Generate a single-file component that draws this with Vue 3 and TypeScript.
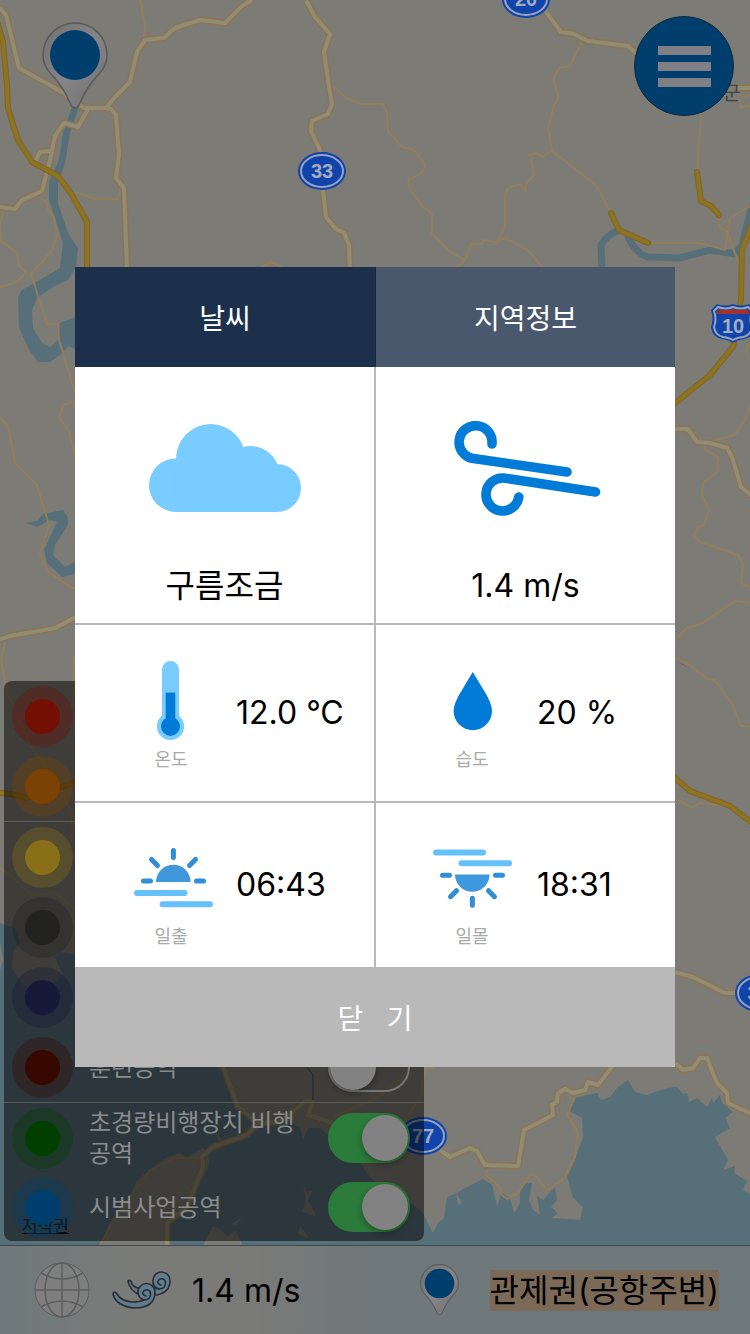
<script setup lang="ts">
import { ref } from 'vue'

interface Zone {
  id: string
  color: string
  label?: string
  on?: boolean
  divided?: boolean
}

const zones = ref<Zone[]>([
  { id: 'z1', color: '#740f03' },
  { id: 'z2', color: '#7c4203' },
  { id: 'z3', color: '#886f18', divided: true },
  { id: 'z4', color: '#222221' },
  { id: 'z5', color: '#161a38' },
  { id: 'z6', color: '#360800', label: '훈련공역', on: false },
  { id: 'z7', color: '#003f00', label: '초경량비행장치 비행공역', on: true, divided: true },
  { id: 'z8', color: '#003f6d', label: '시범사업공역', on: true },
])

const tab = ref<'weather' | 'area'>('weather')

const majorRoads: string[] = [
  'M0 8L6 15L19 68L62 92L84 108L106 108L115 97L130 82L137 52L145 40L164 38L175 28L200 20L225 23L243 5L252 0',
  'M104 108L111 109L116 115L119 155L116 178L124 188L127 270',
  'M88 109L78 127L64 123L55 136L50 160L42 191L22 200L15 209L0 207',
  'M50 151L40 152L34 164',
  'M306 0L315 17L330 34L324 52L328 80L332 104L328 114L312 121L311 131L320 150L323 190L326 217L336 229L344 233L349 245L350 270',
  'M546 12L561 32L574 34L588 41L628 46L640 57',
  'M736 88L752 88',
  'M0 639L10 636L55 628L76 617',
  'M675 429L688 429L697 442L710 443L727 448L732 457L741 487L752 496',
  'M675 972L693 977L725 993L740 993',
  'M167 1245L167 1223L187 1207L203 1167L202 1157L213 1147L247 1135L258 1123L280 1122L307 1100L313 1102L308 1115L333 1123',
  'M223 1066L238 1107L257 1122',
  'M440 1150L450 1157L470 1148L477 1151L485 1165L518 1166L524 1130L553 1115L552 1105L557 1102L558 1093L565 1089L573 1093L585 1090L588 1082L598 1085L614 1064',
  'M675 1063L683 1070L693 1068L700 1058L707 1058L717 1083L727 1093L728 1103L752 1114',
]

const minorRoads: string[] = [
  'M140 0L145 25L144 38',
  'M76 192L96 199L117 199L121 190',
  'M38 196L47 202L48 210L54 217L57 236L52 250L38 267',
  'M3 212L0 225L1 241L17 253L19 266L26 272L17 282L0 287',
  'M43 260L31 274L47 324L58 324L59 340L68 370L76 396',
  'M333 86L345 97L360 104L383 104L387 113L388 131L402 147L414 150L425 165L422 173L408 180L409 187L421 205L432 214L432 234L449 251L465 260L456 268',
  'M260 268L271 262L284 268',
  'M465 260L471 244L482 244L484 240L497 242L506 238L529 251L543 268',
  'M497 242L505 227L505 195L508 188L520 184L525 192L527 183L534 175L531 160L533 157L529 155L537 153L543 157L552 150L548 128L554 105L558 98L554 78L559 68L570 66L582 42',
  'M551 150L596 185L611 213',
  'M648 243L700 243L725 250L730 218L752 205',
  'M701 115L697 172',
  'M718 218L720 228L727 231L739 264',
  'M752 95Q737 95 741 108L752 104',
  'M752 340Q744 350 748 358',
  'M752 400L745 420L735 435L704 443L705 450L718 457L717 472L703 483L702 495L709 510L704 525L698 527L694 535L700 542L738 555L743 565L741 583L752 588',
  'M675 640L687 628L703 623L735 601L752 603',
  'M675 657L690 665L707 679L715 680L733 705L741 726L752 727',
  'M675 798L692 808L700 803L730 806L742 815',
  'M0 418L8 425L15 463L37 485L49 525L40 553L48 572L72 588L76 588',
  'M76 401L63 405L59 417L69 432L76 458',
  'M5 642L1 660L8 695L30 745L45 765L72 812L72 840',
  'M74 655L73 705',
  'M0 868L10 875L23 887L32 895L55 893L76 910',
  'M100 1245L112 1222L135 1190L150 1170L175 1158L203 1158',
  'M333 1117L380 1096L403 1078L408 1066',
  'M435 1068L425 1068L420 1097L405 1120',
  'M488 1168L486 1175L500 1187L502 1195L507 1199L518 1193L530 1175L535 1175L547 1190L565 1178L567 1172L575 1157L578 1132L567 1115L575 1097',
]

const highways: string[] = [
  'M-2 24L3 42L7 85L8 108L18 140L32 162L58 176L72 195L87 222L87 270',
  'M611 213L619 230L648 243',
  'M697 172L701 201L711 206L719 215',
  'M754 220L742 250L741 300L733 347L710 375L674 404',
  'M674 777L690 791L730 806L752 823',
  'M0 793L12 794L27 798L76 782',
]
</script>

<template>
  <div class="screen">
    <div class="map">
      <svg class="map-art" viewBox="0 0 750 1334" preserveAspectRatio="xMidYMid slice" aria-hidden="true">
        <rect width="750" height="1334" fill="#7d7b75" />
        <g fill="#566f79">
          <path d="M72 107L79 107L70 133L65 163L58 183L58 203L68 233L78 248L76 267L68 280L53 287L37 298L32 310L33 328L42 343L50 347L58 340L60 323L78 316L78 350L68 346L60 355L50 362L38 362L28 348L19 327L18 297L22 290L40 280L60 268L63 243L55 217L49 200L49 182L59 160L63 133Z" />
          <path d="M25 523L37 521L43 514L63 510L68 518L68 525L55 545L53 555L65 567L78 560L78 573L62 577L47 563L44 550L57 522L50 520L37 527Z" />
          <path d="M675 661L690 669L683 664Z" />
          <path d="M0 923L15 928L20 942L13 952L12 968L23 985L33 990L53 985L63 975L55 958L60 952L76 955L150 1000L217 1067L230 1080L240 1107L258 1120L290 1123L300 1127L303 1140L308 1128L320 1128L330 1137L360 1163L370 1177L380 1185L400 1193L423 1213L433 1233L438 1223L444 1218L447 1197L455 1194L465 1188L483 1179L492 1185L497 1206L502 1193L511 1199L515 1212L520 1203L520 1193L523 1184L532 1183L529 1200L533 1210L540 1215L537 1196L543 1200L555 1187L557 1200L551 1207L558 1213L551 1218L580 1220L583 1207L573 1198L567 1177L575 1160L583 1137L582 1118L568 1110L575 1098L597 1093L601 1100L610 1097L617 1088L628 1080L635 1092L647 1095L667 1088L677 1087L683 1094L687 1093L689 1102L697 1098L707 1107L712 1098L713 1103L720 1095L722 1103L733 1112L725 1118L730 1128L715 1137L728 1160L723 1170L735 1166L734 1173L747 1181L743 1190L752 1195L752 1334L0 1334Z" />
        </g>
        <g fill="#7d7b75">
          <path d="M100 1246L110 1223L130 1197L137 1180L150 1170L167 1157L180 1153L187 1157L203 1148L210 1160L207 1170L190 1200L170 1220L168 1246Z" />
          <path d="M203 1246L208 1235L213 1226L221 1230L227 1236L236 1231L243 1246Z" />
          <path d="M303 1183L306 1192L313 1190L308 1200L313 1208L315 1216L302 1212L306 1200ZM300 1226L304 1231L309 1239L298 1234Z" />
          <path d="M232 1224L242 1217L236 1225ZM456 1192L462 1203L458 1205ZM510 1198L519 1205L514 1213ZM215 1131L222 1140L218 1141Z" />
          <path d="M0 942L3 960L0 970Z" />
        </g>
        <g fill="none" stroke="#566f79" stroke-width="7">
          <path d="M602 268L601 245Q607 235 619 230" />
          <path d="M627 235Q636 254 648 257L680 258L710 250L735 254L742 245L752 205" />
        </g>
        <g fill="none" stroke="#927e5b" stroke-width="2" stroke-linejoin="round">
          <path v-for="road in minorRoads" :key="road" :d="road" />
        </g>
        <g fill="none" stroke-linejoin="round">
          <path v-for="road in majorRoads" :key="road" :d="road" stroke="#8c7455" stroke-width="7" />
          <path v-for="road in majorRoads" :key="road" :d="road" stroke="#918c74" stroke-width="4" />
        </g>
        <g fill="none" stroke-linejoin="round" stroke-linecap="round">
          <path v-for="road in highways" :key="road" :d="road" stroke="#846428" stroke-width="6" />
          <path v-for="road in highways" :key="road" :d="road" stroke="#8d7421" stroke-width="4" />
        </g>
        <g fill="none" stroke="#3c4a50" stroke-width="1">
          <path d="M307 1067L313 1075L313 1100" />
        </g>
        <g class="shield">
          <ellipse cx="322" cy="171" rx="24" ry="19" />
          <ellipse class="shield-line" cx="322" cy="171" rx="21" ry="16" />
          <text x="322" y="178">33</text>
          <ellipse cx="526" cy="-1" rx="24" ry="19" />
          <ellipse class="shield-line" cx="526" cy="-1" rx="21" ry="16" />
          <text x="526" y="6">20</text>
          <ellipse cx="423" cy="1136" rx="24" ry="19" />
          <ellipse class="shield-line" cx="423" cy="1136" rx="21" ry="16" />
          <text x="423" y="1143">77</text>
          <ellipse cx="759" cy="993" rx="24" ry="19" />
          <ellipse class="shield-line" cx="759" cy="993" rx="21" ry="16" />
          <text x="753" y="1000">3</text>
          <path d="M717 304Q725 307 733 304Q741 307 749 304L755 310Q752 318 755 327Q754 337 744 339Q737 340 733 343Q729 340 722 339Q712 337 711 327Q714 318 711 310Z" />
          <path class="shield-line" d="M718 307Q726 310 733 307Q740 310 748 307L752 311Q749 319 752 327Q751 335 743 337Q736 338 733 340Q730 338 723 337Q715 335 714 327Q717 319 714 311Z" />
          <path d="M719 309Q726 311 733 309Q740 311 747 309L750 314L716 314Z" fill="#a3312c" />
          <text x="733" y="333">10</text>
        </g>
        <text class="place" x="723" y="100">군</text>
      </svg>
      <a class="copyright" href="#">저작권</a>
    </div>

    <header class="top">
      <svg class="pin" viewBox="0 0 66 88" role="img" aria-label="현재 위치">
        <defs>
          <linearGradient id="pinShade" x1="0" y1="0" x2="1" y2="1">
            <stop offset="0" stop-color="#717171" />
            <stop offset="0.5" stop-color="#858588" />
            <stop offset="1" stop-color="#6f6f70" />
          </linearGradient>
        </defs>
        <path d="M33 86Q30 86 28 81Q22 66 10 53Q1 44 1 33A32 32 0 0 1 65 33Q65 44 56 53Q44 66 38 81Q36 86 33 86Z" fill="url(#pinShade)" stroke="#5a5a5c" stroke-width="1.5" />
        <circle cx="33" cy="33" r="25" fill="#003f6d" />
      </svg>
      <button class="menu" type="button" aria-label="메뉴">
        <span class="bar"></span>
        <span class="bar"></span>
        <span class="bar"></span>
      </button>
    </header>

    <ul class="legend">
      <li v-for="zone in zones" :key="zone.id" class="zone" :class="{ divided: zone.divided }">
        <svg class="swatch" viewBox="0 0 61 61" aria-hidden="true">
          <circle cx="30.5" cy="30.5" r="30.5" :fill="zone.color" fill-opacity="0.35" />
          <circle cx="30.5" cy="30.5" r="17.5" :fill="zone.color" />
        </svg>
        <template v-if="zone.label">
          <label class="zone-label" :for="zone.id">{{ zone.label }}</label>
          <input :id="zone.id" v-model="zone.on" class="switch" type="checkbox" />
        </template>
      </li>
    </ul>

    <footer class="status">
      <svg class="globe" viewBox="0 0 56 56" aria-hidden="true">
        <circle cx="28" cy="28" r="27" fill="#7f7f7f" />
        <g fill="none" stroke="#5c5e5e" stroke-width="1.5">
          <circle cx="28" cy="28" r="27" stroke-width="1" />
          <ellipse cx="28" cy="28" rx="17" ry="27" />
          <path d="M28 1V55M1 28H55M7 11Q28 23 49 11M7 45Q28 33 49 45" />
        </g>
      </svg>
      <svg class="breeze" viewBox="0 0 60 40" aria-hidden="true">
        <g fill="#617c8f" stroke="#2b2e31" stroke-width="1.6" stroke-linejoin="round" stroke-linecap="round">
          <path d="M16 11Q19 9 20 14Q23 19 31 18L42 18L47 19Q40 17 41 10A8.5 8.5 0 0 1 58 11Q58 22 45 25L28 25Q17 20 16 11Z" />
          <path d="M47 19Q54 19 53.5 12A4 4 0 0 0 46 11Q45 14 49 15" fill="none" />
          <path d="M1 24Q2 20 5 24Q9 31 20 32Q28 32 32 30Q26 28 26 22A8.5 8.5 0 0 1 43 22Q43 38 22 38Q4 36 1 24Z" />
          <path d="M32 30Q39 30 38.5 23A4 4 0 0 0 31 22Q30 25 34 26" fill="none" />
        </g>
      </svg>
      <span class="speed">1.4 m/s</span>
      <svg class="small-pin" viewBox="0 0 66 88" aria-hidden="true">
        <path d="M33 86Q30 86 28 81Q22 66 10 53Q1 44 1 33A32 32 0 0 1 65 33Q65 44 56 53Q44 66 38 81Q36 86 33 86Z" fill="url(#pinShade)" stroke="#5b5e5f" stroke-width="2" />
        <circle cx="33" cy="33" r="25" fill="#003f6d" />
      </svg>
      <span class="airspace">관제권(공항주변)</span>
    </footer>

    <div class="scrim">
      <section class="dialog" role="dialog" aria-label="날씨">
        <div class="tabs" role="tablist">
          <button class="tab" type="button" role="tab" :class="{ active: tab === 'weather' }" :aria-selected="tab === 'weather'" @click="tab = 'weather'">날씨</button>
          <button class="tab" type="button" role="tab" :class="{ active: tab === 'area' }" :aria-selected="tab === 'area'" @click="tab = 'area'">지역정보</button>
        </div>

        <div class="cells">
          <div class="cell tall">
            <svg class="large-icon" viewBox="0 0 152 96" fill="#78ccff" aria-hidden="true">
              <circle cx="26.7" cy="64.2" r="26.7" />
              <circle cx="61.7" cy="37.7" r="34.7" />
              <circle cx="101.7" cy="53.7" r="28.7" />
              <circle cx="128" cy="67" r="24" />
              <path d="M26.7 50H128V91H26.7Z" />
            </svg>
            <span class="reading">구름조금</span>
          </div>
          <div class="cell tall">
            <svg class="large-icon" viewBox="450 421 152 96" fill="none" stroke="#007bd8" stroke-width="9.6" stroke-linecap="round" aria-hidden="true">
              <path d="M567 472L473.5 458.5A16.5 16.5 0 1 1 492 444" />
              <path d="M595.5 492L503.5 478A16.5 16.5 0 1 0 518.8 497" />
            </svg>
            <span class="reading">1.4 m/s</span>
          </div>

          <div class="cell">
            <div class="figure">
              <svg class="icon" viewBox="129 655 84 88" aria-hidden="true">
                <rect x="162" y="661" width="17" height="70" rx="8.5" fill="#78ccff" />
                <circle cx="170.5" cy="726.4" r="13.6" fill="#78ccff" />
                <rect x="165.7" y="692.6" width="9.6" height="30" fill="#007bd8" />
                <circle cx="170.5" cy="726.4" r="9.5" fill="#007bd8" />
              </svg>
              <span class="caption">온도</span>
            </div>
            <span class="reading">12.0 °C</span>
          </div>
          <div class="cell">
            <div class="figure">
              <svg class="icon" viewBox="430 655 84 88" aria-hidden="true">
                <path d="M472.8 672Q477 679 483 689Q492 703 492 711A19.2 19.2 0 0 1 453.6 711Q453.6 703 462.6 689Q468.5 679 472.8 672Z" fill="#007bd8" />
              </svg>
              <span class="caption">습도</span>
            </div>
            <span class="reading">20 %</span>
          </div>

          <div class="cell">
            <div class="figure sun">
              <svg class="icon" viewBox="129 821 84 88" aria-hidden="true">
                <path d="M156 882A17.3 17.3 0 0 1 190.6 882Z" fill="#3f98de" />
                <path d="M173.4 850.5V857.5M151.5 859.5L157.5 865.5M195.5 859.5L189.5 865.5M143.5 881H150.5M196.5 881H203.5" stroke="#2f8ed6" stroke-width="5" stroke-linecap="round" />
                <path d="M137 893H184.5M162.5 904.3H210" stroke="#66c1fb" stroke-width="6" stroke-linecap="round" />
              </svg>
              <span class="caption">일출</span>
            </div>
            <span class="reading">06:43</span>
          </div>
          <div class="cell">
            <div class="figure sun">
              <svg class="icon" viewBox="430 821 84 88" aria-hidden="true">
                <path d="M455 874.4A17.3 17.3 0 0 0 489.6 874.4Z" fill="#3f98de" />
                <path d="M472.4 898.2V905.2M450.5 896.7L456.5 890.7M494.5 896.7L488.5 890.7M442.5 875.3H449.5M495.5 875.3H502.5" stroke="#2f8ed6" stroke-width="5" stroke-linecap="round" />
                <path d="M436 852.5H483M461.5 863.3H509" stroke="#66c1fb" stroke-width="6" stroke-linecap="round" />
              </svg>
              <span class="caption">일몰</span>
            </div>
            <span class="reading">18:31</span>
          </div>
        </div>

        <button class="close" type="button">닫&nbsp;&nbsp;&nbsp;기</button>
      </section>
    </div>
  </div>
</template>

<style scoped>
.screen {
  position: relative;
  display: flex;
  flex-direction: column;
  min-height: 100vh;
  overflow: hidden;
  font-family: Inter, "Noto Sans CJK KR", sans-serif;
}

button {
  margin: 0;
  padding: 0;
  border: 0;
  font: inherit;
  cursor: pointer;
}

.map {
  position: absolute;
  inset: 0;
}

.map-art {
  display: block;
  width: 100%;
  height: 100%;
}

.shield {
  fill: #1144aa;
}

.shield-line {
  fill: none;
  stroke: #98a3bd;
  stroke-width: 2;
}

.shield text {
  fill: #a3acc0;
  font: bold 20px "Liberation Sans", sans-serif;
  text-anchor: middle;
}

.place {
  fill: #444442;
  font-size: 19px;
}

.copyright {
  position: absolute;
  left: 22px;
  bottom: 95px;
  color: #0c1418;
  font-size: 17px;
  line-height: 26px;
}

.top {
  position: relative;
  display: flex;
  justify-content: space-between;
  align-items: flex-start;
  padding: 16px 16px 0 42px;
}

.pin {
  width: 66px;
  height: 88px;
  margin-top: 6px;
}

.menu {
  display: flex;
  flex-direction: column;
  align-items: center;
  justify-content: center;
  gap: 7px;
  width: 100px;
  height: 100px;
  border: 1px solid #0d2b3f;
  border-radius: 50%;
  background: #003f6d;
}

.bar {
  width: 53px;
  height: 9px;
  background: #7f7f86;
}

.legend {
  position: relative;
  width: 56%;
  margin: auto 0 4px 4px;
  padding: 0;
  border-radius: 8px;
  background: rgba(0, 0, 0, 0.5);
  list-style: none;
}

.zone {
  display: flex;
  align-items: center;
  gap: 16px;
  height: 70px;
  padding: 0 14px 0 8px;
}

.zone:last-child {
  height: 68px;
}

.divided {
  border-top: 1px solid #5a5a58;
}

.swatch {
  flex: none;
  width: 61px;
  height: 61px;
}

.zone-label {
  flex: 1;
  color: #8a8c8c;
  font-size: 24px;
  line-height: 31px;
}

.switch {
  flex: none;
  box-sizing: border-box;
  width: 82px;
  height: 50px;
  margin: 0;
  padding: 0;
  border: 2px solid #777777;
  border-radius: 25px;
  appearance: none;
}

.switch::before {
  content: "";
  display: block;
  width: 46px;
  height: 46px;
  border-radius: 50%;
  background: #828282;
  box-shadow: 0 3px 6px rgba(0, 0, 0, 0.3);
}

.switch:checked {
  border-color: #2b7b3a;
  background: #2b7b3a;
}

.switch:checked::before {
  margin-left: auto;
}

.status {
  position: relative;
  display: flex;
  align-items: center;
  box-sizing: border-box;
  height: 89px;
  padding: 0 31px 0 34px;
  border-top: 1px solid #3f4a4e;
  background: linear-gradient(90deg, #6f797b 0%, #7a7b79 18%, #7a7a78 34%, #6f787a 50%, #6f787a 100%);
  color: #000000;
  font-size: 32px;
  line-height: 41px;
}

.globe {
  width: 56px;
  height: 56px;
}

.breeze {
  width: 60px;
  height: 40px;
  margin: 0 20px 0 22px;
}

.small-pin {
  width: 39px;
  height: 52px;
  margin: 0 31px 0 auto;
}

.airspace {
  background: #7b6a58;
}

.scrim {
  position: fixed;
  inset: 0;
  display: flex;
  align-items: center;
  justify-content: center;
}

.dialog {
  width: 80%;
  background: #ffffff;
}

.tabs {
  display: grid;
  grid-template-columns: 1fr 1fr;
}

.tab {
  height: 100px;
  background: #4a586d;
  color: #ffffff;
  font-size: 28px;
}

.tab.active {
  background: #1c2f4b;
}

.tab + .tab {
  border-left: 1px solid #182740;
}

.cells {
  display: grid;
  grid-template-columns: 1fr 1fr;
  grid-template-rows: 256px 176px 164px;
  gap: 2px;
  background: #b9b9b9;
}

.cell {
  display: flex;
  align-items: center;
  gap: 23px;
  padding-left: 54px;
  background: #ffffff;
}

.cell.tall {
  flex-direction: column;
  gap: 49px;
  box-sizing: border-box;
  padding: 54px 0 17px;
}

.large-icon {
  width: 152px;
  height: 96px;
}

.figure {
  display: flex;
  flex-direction: column;
  align-items: center;
  gap: 5px;
}

.figure.sun {
  gap: 16px;
}

.icon {
  width: 84px;
  height: 88px;
}

.caption {
  color: #a9a9a9;
  font-size: 18px;
  line-height: 24px;
}

.reading {
  color: #000000;
  font-size: 32px;
  line-height: 40px;
}

.close {
  display: block;
  width: 100%;
  height: 100px;
  background: #b9b9b9;
  color: #ffffff;
  font-size: 28px;
}
</style>

<style>
body {
  margin: 0;
  background: #7d7b75;
}
</style>
